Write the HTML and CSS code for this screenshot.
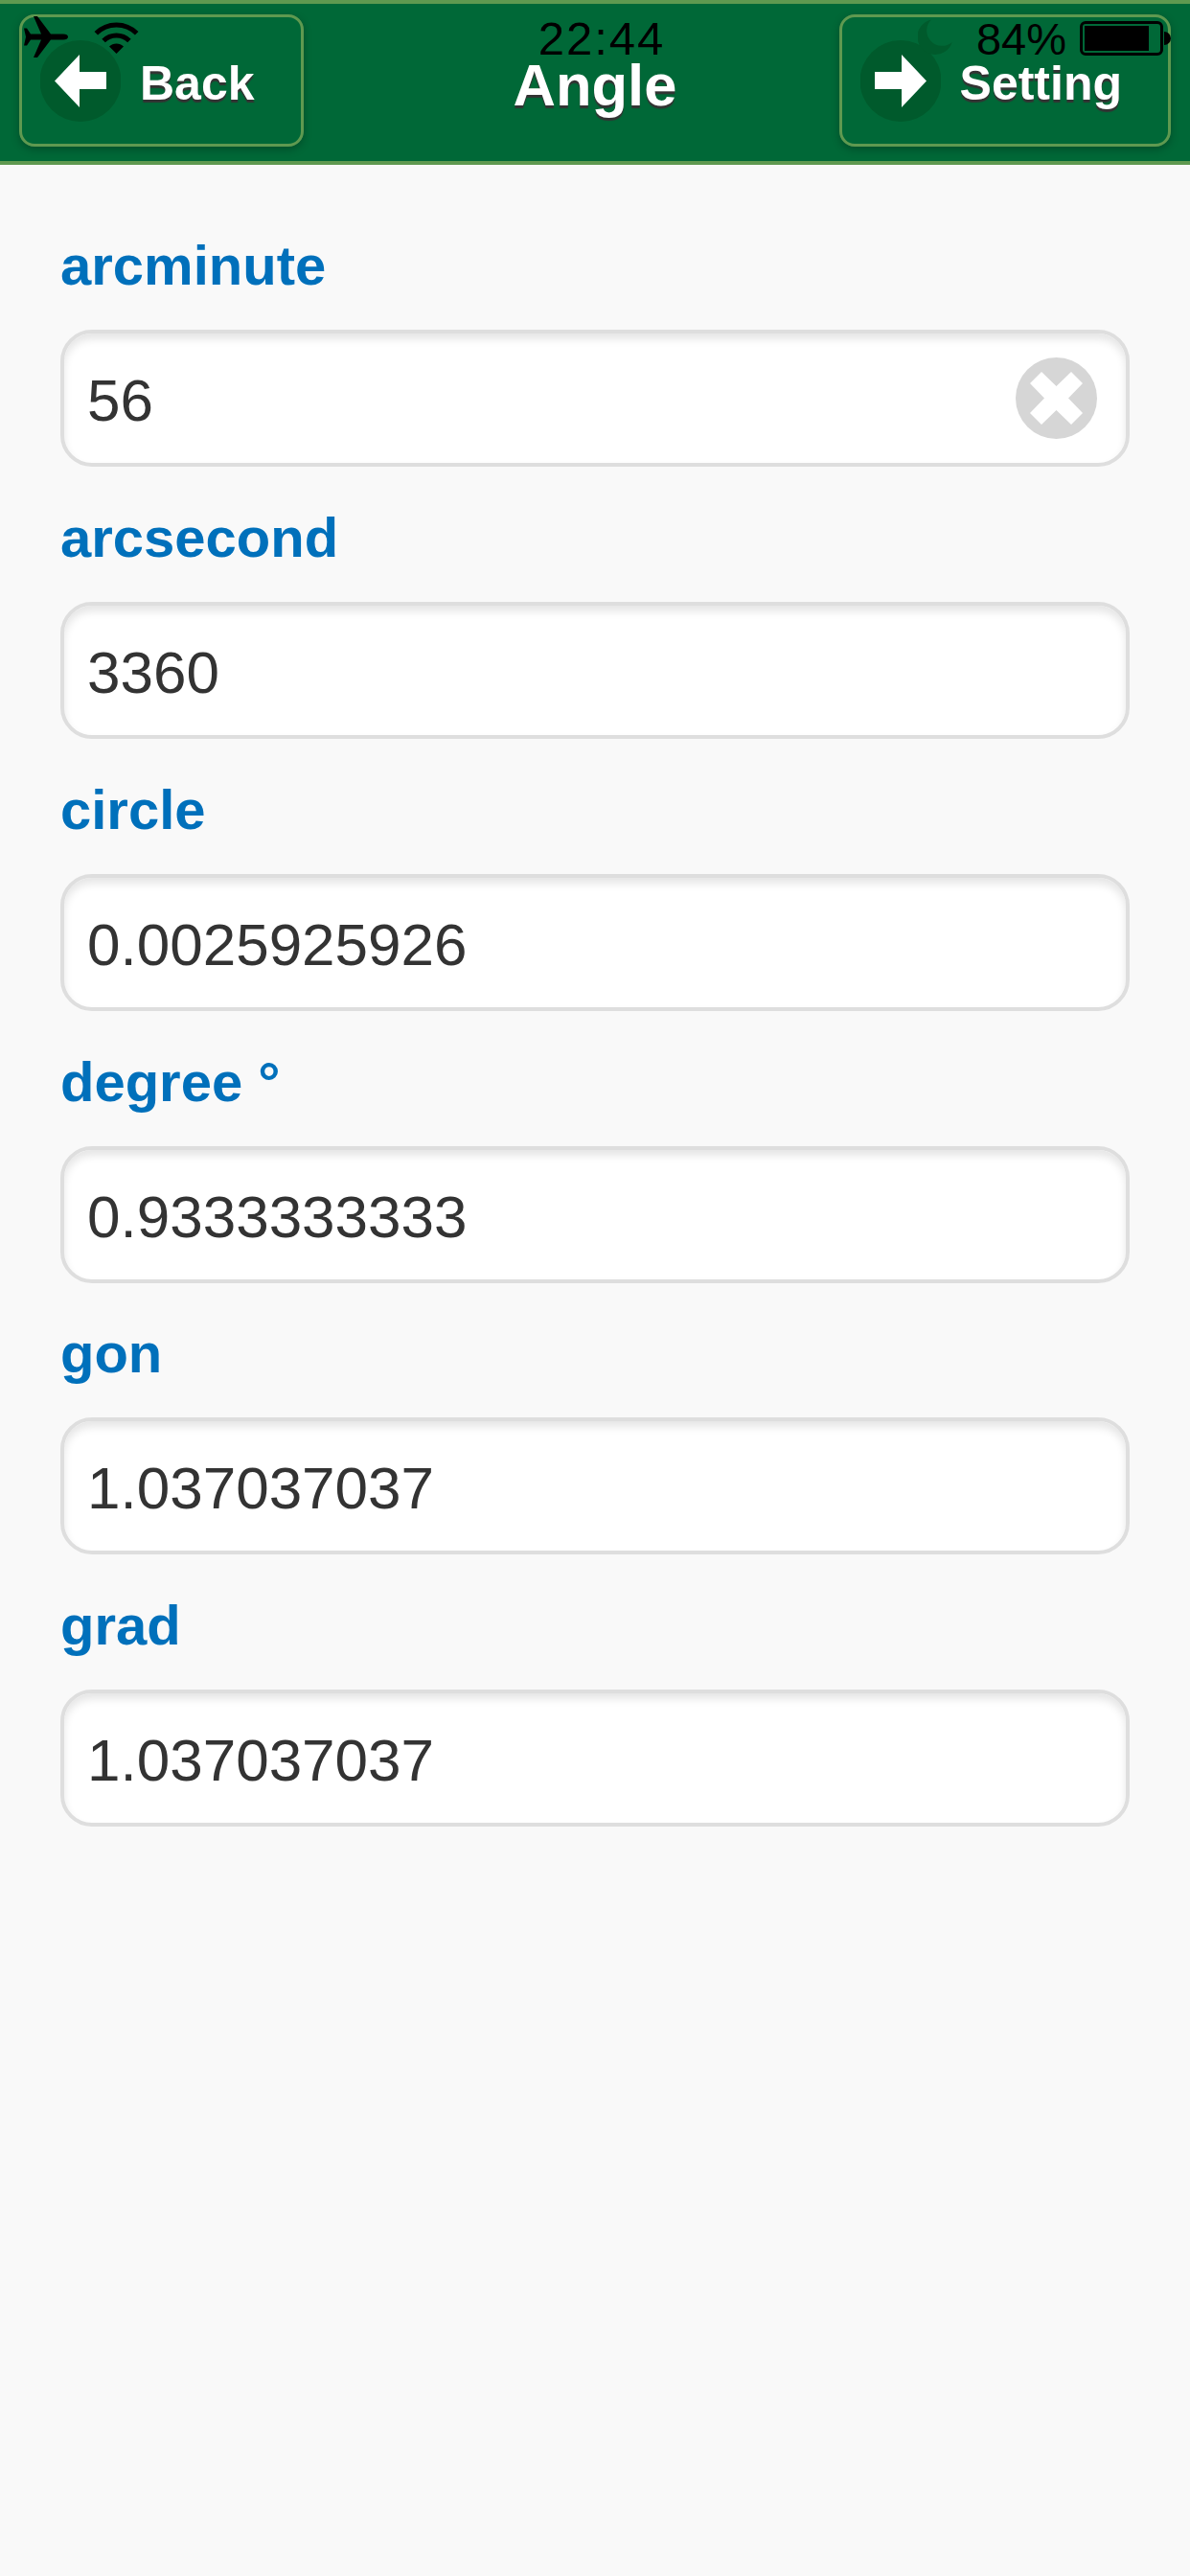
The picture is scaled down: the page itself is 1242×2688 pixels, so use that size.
FILE: index.html
```html
<!DOCTYPE html>
<html lang="en">
<head>
<meta charset="utf-8">
<title>Angle</title>
<link rel="stylesheet" href="styles.css">
</head>
<body>
<header class="header">
  <a class="btn btn-back">
    <svg class="btn-icon" viewBox="0 0 84 85"><circle cx="42" cy="42.5" r="42.5" fill="#005a2c"/><path d="M15 42.5 41 15V33H69V51H41V70Z" fill="#fff"/></svg>
    <span>Back</span>
  </a>
  <h1 class="title">Angle</h1>
  <a class="btn btn-setting">
    <svg class="btn-icon" viewBox="0 0 84 85"><circle cx="42" cy="42.5" r="42.5" fill="#005a2c"/><path d="M69 42.5 43 15V33H15V51H43V70Z" fill="#fff"/></svg>
    <span>Setting</span>
  </a>
  <div class="status">
    <div class="status-left">
      <svg class="plane" viewBox="0 0 46 43"><path d="M46 21.5c0-2-2-3-5-3H28L14 0h-4l8 18.5H7L3 12.5H0L2 21.5 0 30.5H3L7 24.5H18L10 43h4L28 24.5H41c3 0 5-1 5-3z"/></svg>
      <svg class="wifi" viewBox="0 0 47 34"><path d="M2.3 12.8A30 30 0 0 1 44.7 12.8M10.1 20.6A19 19 0 0 1 36.9 20.6" fill="none" stroke="#000" stroke-width="5"/><path d="M23.5 34 16 26.5A10.6 10.6 0 0 1 31 26.5Z"/></svg>
    </div>
    <div class="time">22:44</div>
    <div class="status-right">
      <svg class="moon" viewBox="0 0 36 37"><path d="M14 .4A18.5 18.5 0 1 0 35.7 23.9 16 16 0 0 1 14 .4Z" fill="#005a2c"/></svg>
      <span class="pct">84%</span>
      <div class="battery"><div class="battery-body"><div class="battery-level"></div></div><div class="battery-nub"></div></div>
    </div>
  </div>
</header>
<main class="form">
  <div class="field"><label class="label">arcminute</label><div class="input-wrap"><input class="input" type="text" value="56" readonly>
    <svg class="clear" viewBox="0 0 85 85"><circle cx="42.5" cy="42.5" r="42.5" fill="#d6d6d6"/><path d="M42.5 30 27 15 15 27 30 42.5 15 58 27 70 42.5 55 58 70 70 58 55 42.5 70 27 58 15Z" fill="#fff"/></svg></div></div>
  <div class="field"><label class="label">arcsecond</label><div class="input-wrap"><input class="input" type="text" value="3360" readonly></div></div>
  <div class="field"><label class="label">circle</label><div class="input-wrap"><input class="input" type="text" value="0.0025925926" readonly></div></div>
  <div class="field"><label class="label">degree °</label><div class="input-wrap"><input class="input" type="text" value="0.9333333333" readonly></div></div>
  <div class="field"><label class="label">gon</label><div class="input-wrap"><input class="input" type="text" value="1.037037037" readonly></div></div>
  <div class="field"><label class="label">grad</label><div class="input-wrap"><input class="input" type="text" value="1.037037037" readonly></div></div>
</main>
</body>
</html>
```
FILE: styles.css
```css
* { box-sizing: border-box; }
html, body { margin: 0; padding: 0; }
body {
  width: 1242px;
  height: 2688px;
  background: #f9f9f9;
  font-family: "Liberation Sans", Arial, sans-serif;
  overflow: hidden;
}
.header {
  position: relative;
  height: 172px;
  background: #006837;
  border-top: 4px solid #5f9950;
  border-bottom: 4px solid #5f9950;
  display: grid;
  grid-template-columns: 1fr auto 1fr;
  align-items: start;
  padding: 11px 20px 0;
}
.btn {
  display: flex;
  align-items: center;
  gap: 20px;
  height: 138px;
  padding: 0 48px 0 19px;
  border: 3px solid #5f9950;
  border-radius: 16px;
  box-shadow: 0 3px 9px rgba(0, 0, 0, .25);
  color: #fff;
  font-size: 50px;
  font-weight: 700;
  text-shadow: 0 3px 1px #333;
}
.btn span { position: relative; top: 3px; }
.btn-back { justify-self: start; }
.btn-setting { justify-self: end; }
.btn-icon { width: 84px; height: 85px; flex: none; }
.title {
  margin: 0;
  padding-top: 39px;
  color: #fff;
  font-size: 61.5px;
  line-height: 70px;
  font-weight: 700;
  text-shadow: 0 3px 1px #333;
}
.status {
  position: absolute;
  left: 0;
  right: 0;
  top: -4px;
  display: grid;
  grid-template-columns: 1fr auto 1fr;
  align-items: start;
  color: #000;
  font-size: 47px;
  line-height: 46px;
}
.status-left {
  display: flex;
  align-items: flex-start;
  gap: 27px;
  padding: 17px 0 0 25px;
}
.plane { width: 46px; height: 43px; flex: none; }
.wifi { width: 47px; height: 34px; margin-top: 5px; flex: none; }
.time { padding: 17px 0 0 14px; font-size: 49px; letter-spacing: 2px; }
.status-right {
  display: flex;
  justify-content: flex-end;
  align-items: flex-start;
  padding: 20px 20px 0 0;
}
.moon { width: 36px; height: 37px; flex: none; margin-right: 25px; }
.pct { margin: -2px 14px 0 0; }
.battery { display: flex; align-items: center; margin-top: 2px; }
.battery-body {
  width: 87px;
  height: 36px;
  border: 3px solid #000;
  border-radius: 6px;
  padding: 2px;
}
.battery-level { width: 67px; height: 100%; background: #000; }
.battery-nub {
  width: 7px;
  height: 14px;
  margin-left: 1px;
  background: #000;
  border-radius: 0 7px 7px 0;
}
.form { padding: 73px 63px 0; }
.field { margin-bottom: 41.85px; }
.label {
  display: block;
  height: 99px;
  color: #0070bb;
  font-size: 58px;
  line-height: 64px;
  font-weight: 700;
}
.input-wrap { position: relative; }
.input {
  display: block;
  width: 100%;
  height: 143px;
  padding: 4px 24px 0;
  border: 4px solid #dedede;
  border-radius: 33px;
  background: #fff;
  box-shadow: inset 0 6px 8px rgba(0, 0, 0, .1);
  color: #333;
  font-family: "Liberation Sans", Arial, sans-serif;
  font-size: 62px;
  outline: none;
}
.clear {
  position: absolute;
  top: 29px;
  right: 34px;
  width: 85px;
  height: 85px;
}
```
